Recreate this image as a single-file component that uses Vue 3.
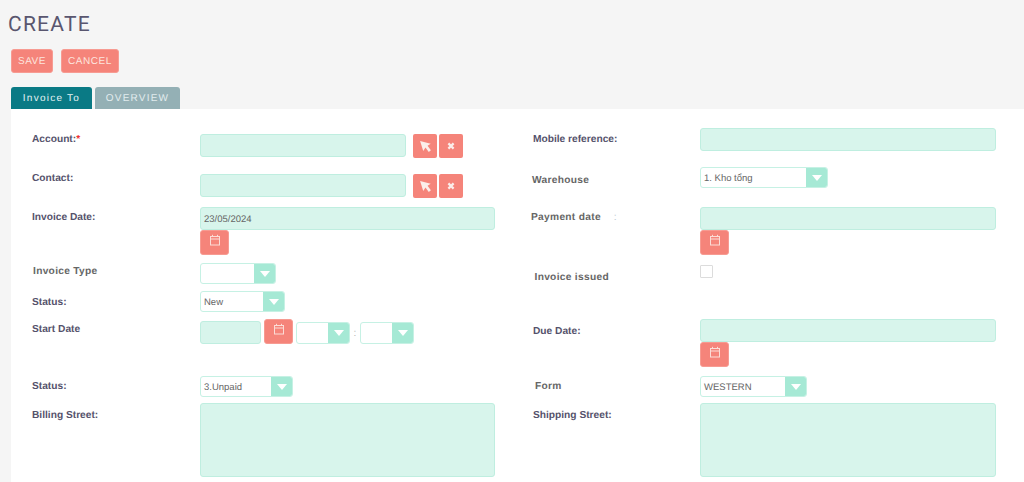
<script setup>
</script>

<template>
  <div class="page">
    <h1 class="title">CREATE</h1>
    <div class="actions">
      <button class="act save">SAVE</button>
      <button class="act cancel">CANCEL</button>
    </div>
    <div class="tabs">
      <div class="tab active">Invoice To</div>
      <div class="tab">OVERVIEW</div>
    </div>
    <div class="panel">
      <div class="col left">
        <div class="row r-account">
          <label class="lab up3">Account:<span class="req">*</span></label>
          <div class="ctl inline">
            <div class="input w206"></div>
            <button class="sq first">
              <svg width="13" height="13" viewBox="0 0 12 12"><path d="M1 1 L10.8 3.4 L7.9 5.4 L11 9.4 L9 11 L6 7 L3.9 10.2 Z" fill="#fbeeea"/></svg>
            </button>
            <button class="sq">
              <svg width="8" height="8" viewBox="0 0 8 8"><path d="M1.4 1.4 L6.6 6.6 M6.6 1.4 L1.4 6.6" stroke="#fbeeea" stroke-width="2.2"/></svg>
            </button>
          </div>
        </div>
        <div class="row r-contact">
          <label class="lab up4">Contact:</label>
          <div class="ctl inline">
            <div class="input w206"></div>
            <button class="sq first">
              <svg width="13" height="13" viewBox="0 0 12 12"><path d="M1 1 L10.8 3.4 L7.9 5.4 L11 9.4 L9 11 L6 7 L3.9 10.2 Z" fill="#fbeeea"/></svg>
            </button>
            <button class="sq">
              <svg width="8" height="8" viewBox="0 0 8 8"><path d="M1.4 1.4 L6.6 6.6 M6.6 1.4 L1.4 6.6" stroke="#fbeeea" stroke-width="2.2"/></svg>
            </button>
          </div>
        </div>
        <div class="row r-date">
          <label class="lab dn2">Invoice Date:</label>
          <div class="ctl">
            <div class="input wide val">23/05/2024</div>
            <button class="cal">
              <svg width="12" height="12" viewBox="0 0 12 12" fill="none" stroke="#fbdcd6"><rect x="1.5" y="2.5" width="9" height="8.5"/><path d="M1.5 5H10.5M3.5 .8V2.5M8.5 .8V2.5"/></svg>
            </button>
          </div>
        </div>
        <div class="row r-type">
          <label class="lab plain nudge1">Invoice Type</label>
          <div class="select w76"><span class="sv"></span><span class="dd"><i></i></span></div>
        </div>
        <div class="row r-status">
          <label class="lab dn3">Status:</label>
          <div class="select w85"><span class="sv">New</span><span class="dd"><i></i></span></div>
        </div>
        <div class="row r-start">
          <label class="lab dn2">Start Date</label>
          <div class="ctl inline start">
            <div class="input w61"></div>
            <button class="cal side">
              <svg width="12" height="12" viewBox="0 0 12 12" fill="none" stroke="#fbdcd6"><rect x="1.5" y="2.5" width="9" height="8.5"/><path d="M1.5 5H10.5M3.5 .8V2.5M8.5 .8V2.5"/></svg>
            </button>
            <div class="select w54 t"><span class="sv"></span><span class="dd"><i></i></span></div>
            <span class="colon">:</span>
            <div class="select w54 t last"><span class="sv"></span><span class="dd"><i></i></span></div>
          </div>
        </div>
        <div class="row r-status2">
          <label class="lab dn2">Status:</label>
          <div class="select w93"><span class="sv">3.Unpaid</span><span class="dd"><i></i></span></div>
        </div>
        <div class="row">
          <label class="lab dn4">Billing Street:</label>
          <div class="input wide area"></div>
        </div>
      </div>

      <div class="col right">
        <div class="row r-mobile">
          <label class="lab dn3">Mobile reference:</label>
          <div class="input wide"></div>
        </div>
        <div class="row r-ware">
          <label class="lab plain dn5 back1">Warehouse</label>
          <div class="select w128"><span class="sv">1. Kho tổng</span><span class="dd"><i></i></span></div>
        </div>
        <div class="row r-date">
          <label class="lab plain dn2 back2">Payment date<span class="dim">:</span></label>
          <div class="ctl">
            <div class="input wide"></div>
            <button class="cal">
              <svg width="12" height="12" viewBox="0 0 12 12" fill="none" stroke="#fbdcd6"><rect x="1.5" y="2.5" width="9" height="8.5"/><path d="M1.5 5H10.5M3.5 .8V2.5M8.5 .8V2.5"/></svg>
            </button>
          </div>
        </div>
        <div class="row r-issued">
          <label class="lab plain dn6 nudge15">Invoice issued</label>
          <div class="check"></div>
        </div>
        <div class="row r-due">
          <label class="lab dn4">Due Date:</label>
          <div class="ctl">
            <div class="input wide"></div>
            <button class="cal">
              <svg width="12" height="12" viewBox="0 0 12 12" fill="none" stroke="#fbdcd6"><rect x="1.5" y="2.5" width="9" height="8.5"/><path d="M1.5 5H10.5M3.5 .8V2.5M8.5 .8V2.5"/></svg>
            </button>
          </div>
        </div>
        <div class="row r-form">
          <label class="lab plain dn2 nudge2">Form</label>
          <div class="select w107"><span class="sv">WESTERN</span><span class="dd"><i></i></span></div>
        </div>
        <div class="row">
          <label class="lab dn4">Shipping Street:</label>
          <div class="input wide area"></div>
        </div>
      </div>
    </div>
  </div>
</template>

<style>
html, body { margin: 0; overflow: hidden; }
</style>

<style scoped>
.page {
  height: 482px;
  background: #f5f5f5;
  overflow: hidden;
  display: flex;
  flex-direction: column;
  font-family: "Liberation Sans", Arial, sans-serif;
  text-rendering: geometricPrecision;
  box-sizing: border-box;
}
.title {
  margin: 14px 0 0 8px;
  font-family: Roboto, "Liberation Sans", sans-serif;
  font-weight: 400;
  font-size: 21px;
  line-height: 22px;
  letter-spacing: 1.25px;
  color: #59566f;
}
.actions { display: flex; gap: 8px; margin: 13px 0 0 11px; }
.act {
  height: 24px;
  padding: 2px 0 0;
  border: 1px solid #f79b92;
  border-radius: 3px;
  background: #f5847a;
  color: #fde4df;
  font: 400 10px/20px "Liberation Sans", Arial, sans-serif;
  text-rendering: geometricPrecision;
  letter-spacing: 0.55px;
}
.save { width: 42px; }
.cancel { width: 58px; }
.tabs { display: flex; gap: 3px; margin: 14px 0 0 11px; height: 22px; }
.tab {
  width: 85px;
  box-sizing: border-box;
  padding-top: 1px;
  border-radius: 3px 3px 0 0;
  background: #94b0b5;
  color: #e2ecee;
  text-align: center;
  font-size: 10px;
  line-height: 21px;
  letter-spacing: 1.2px;
}
.tab.active { width: 81px; background: #0a7a85; color: #e6f3f4; letter-spacing: 1.25px; }
.panel {
  flex: 1;
  margin-left: 11px;
  padding-left: 21px;
  background: #fff;
  display: flex;
  overflow: hidden;
}
.col { display: flex; flex-direction: column; }
.left { width: 501px; padding-top: 25px; }
.right { padding-top: 19px; }
.right .lab { margin-right: -1px; }
.right .wide { width: 296px; }
.row { display: flex; align-items: flex-start; flex-shrink: 0; }
.lab {
  width: 168px;
  flex-shrink: 0;
  font-size: 10.2px;
  line-height: 18px;
  font-weight: 700;
  color: #55526b;
}
.lab.plain { color: #666; letter-spacing: 0.3px; }
.req { color: #e33; }
.dim { color: #b9c7cf; font-weight: 400; margin-left: 13px; }
.up3 { margin-top: -3px; }
.up4 { margin-top: -4px; }
.dn2 { margin-top: 2px; }
.dn3 { margin-top: 3px; }
.dn4 { margin-top: 4px; }
.dn5 { margin-top: 5px; }
.dn6 { margin-top: 6px; }
.nudge1 { padding-left: 1px; width: 167px; }
.nudge15 { padding-left: 1.5px; width: 166.5px; }
.nudge2 { padding-left: 2px; width: 166px; }
.back1 { margin-left: -1px; width: 169px; }
.back2 { margin-left: -2px; width: 170px; }
.r-account { margin-bottom: 16px; }
.r-contact { margin-bottom: 9px; }
.r-date { margin-bottom: 8px; }
.r-type { margin-bottom: 7px; }
.r-status { margin-bottom: 7px; }
.r-start { margin-bottom: 32px; }
.r-status2, .r-form { margin-bottom: 6px; }
.r-mobile { margin-bottom: 16px; }
.r-ware { margin-bottom: 17px; }
.r-issued { height: 56px; }
.r-due { margin-bottom: 9px; }
.ctl { display: flex; flex-direction: column; align-items: flex-start; }
.ctl.inline { flex-direction: row; align-items: flex-start; }
.input {
  box-sizing: border-box;
  height: 23px;
  border: 1px solid #bfeee0;
  border-radius: 3px;
  background: #d8f5ec;
  color: #666;
  font-size: 9.5px;
  line-height: 23px;
  padding-left: 3px;
}
.w206 { width: 206px; }
.w61 { width: 61px; margin-top: 2px; }
.wide { width: 295px; }
.area { height: 74px; }
.sq {
  width: 24px;
  height: 24px;
  padding: 0;
  border: none;
  border-radius: 2px;
  background: #f5847a;
  display: flex;
  align-items: center;
  justify-content: center;
  margin-left: 2px;
}
.sq.first { margin-left: 7px; }
.cal {
  box-sizing: border-box;
  width: 29px;
  height: 25px;
  padding: 0 0 5px;
  border: 1px solid #f79b92;
  border-radius: 3px;
  background: #f5847a;
  display: flex;
  align-items: center;
  justify-content: center;
}
.cal.side { margin-left: 3px; }
.select {
  box-sizing: border-box;
  height: 21px;
  display: flex;
  border: 1px solid #c6f1e4;
  border-radius: 3px;
  background: #fff;
  overflow: hidden;
}
.select.t { height: 22px; margin-top: 3px; margin-left: 3px; }
.select.last { margin-left: 0; }
.sv {
  flex: 1;
  padding-left: 3px;
  font-size: 9.5px;
  line-height: 21px;
  color: #666;
  white-space: nowrap;
}
.dd {
  width: 21px;
  background: #a6e9d5;
  display: flex;
  align-items: center;
  justify-content: center;
  flex-shrink: 0;
}
.dd i {
  width: 0;
  height: 0;
  border-left: 5px solid transparent;
  border-right: 5px solid transparent;
  border-top: 6px solid #fff;
}
.w76 { width: 76px; }
.w85 { width: 85px; }
.w54 { width: 54px; }
.w93 { width: 93px; }
.w128 { width: 128px; }
.w107 { width: 107px; }
.colon {
  width: 10px;
  margin-top: 8px;
  text-align: center;
  color: #b5b5b5;
  font-size: 10px;
  line-height: 14px;
}
.check {
  box-sizing: border-box;
  width: 13px;
  height: 13px;
  margin-top: 2px;
  border: 1px solid #dcdcdc;
  border-radius: 1px;
  background: #fff;
}
</style>
